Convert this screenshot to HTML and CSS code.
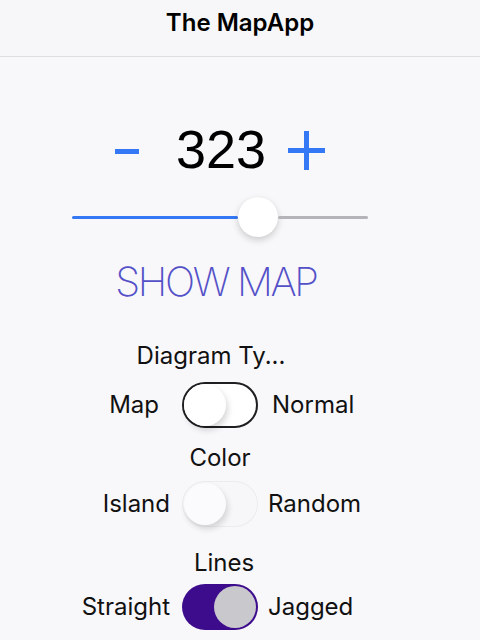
FILE: index.html
```html
<!DOCTYPE html>
<html>
<head>
<meta charset="utf-8">
<link rel="stylesheet" href="styles.css">
</head>
<body>
<header class="nav">
  <h1 class="nav-title">The MapApp</h1>
</header>
<main class="content">
  <div class="stepper">
    <button class="step-btn step-minus" aria-label="decrease">
      <svg width="24" height="6" viewBox="0 0 24 6"><rect x="0" y="0" width="24" height="5" fill="#3478f6"/></svg>
    </button>
    <span class="step-value">323</span>
    <button class="step-btn step-plus" aria-label="increase">
      <svg width="37" height="39" viewBox="0 0 37 39"><rect x="0" y="17" width="37" height="5" fill="#3478f6"/><rect x="16" y="0" width="5" height="39" fill="#3478f6"/></svg>
    </button>
  </div>
  <div class="slider">
    <div class="slider-fill"></div>
    <div class="slider-thumb"></div>
    <div class="slider-rest"></div>
  </div>
  <button class="show-map">SHOW MAP</button>

  <div class="section section-diagram">
    <div class="section-label">Diagram Ty...</div>
    <div class="toggle-row row-map">
      <span class="opt opt-left">Map</span>
      <span class="switch switch-outlined"><span class="knob"></span></span>
      <span class="opt opt-right">Normal</span>
    </div>
  </div>

  <div class="section section-color">
    <div class="section-label">Color</div>
    <div class="toggle-row">
      <span class="opt opt-left">Island</span>
      <span class="switch switch-plain"><span class="knob"></span></span>
      <span class="opt opt-right">Random</span>
    </div>
  </div>

  <div class="section section-lines">
    <div class="section-label">Lines</div>
    <div class="toggle-row">
      <span class="opt opt-left">Straight</span>
      <span class="switch switch-on"><span class="knob"></span></span>
      <span class="opt opt-right">Jagged</span>
    </div>
  </div>
</main>
</body>
</html>
```
FILE: styles.css
```css
* { box-sizing: border-box; }
html, body { margin: 0; padding: 0; }
body {
  background: #f8f7fa;
  font-family: "Inter", "Noto Sans", sans-serif;
  color: #111;
  width: 480px;
  height: 640px;
  overflow: hidden;
}
.nav {
  height: 57px;
  border-bottom: 1px solid #dedde2;
  background: #f7f6f9;
  padding-bottom: 11px;
  display: flex;
  align-items: center;
  justify-content: center;
}
.nav-title {
  margin: 0;
  font-size: 24px;
  font-weight: 600;
  line-height: 28px;
  color: #000;
}
.content {
  width: 440px;
  display: flex;
  flex-direction: column;
  align-items: center;
}
.stepper {
  margin-top: 66px;
  display: flex;
  align-items: center;
  height: 52px;
}
.step-btn {
  border: 0;
  background: none;
  padding: 0;
  display: flex;
  align-items: center;
}
.step-minus { margin-right: 37px; margin-top: 6px; }
.step-plus { margin-left: 22px; margin-top: 2px; }
.step-value {
  font-family: "Liberation Sans", Arial, sans-serif;
  font-size: 54px;
  line-height: 52px;
  color: #000;
}
.slider {
  margin-top: 22px;
  width: 296px;
  height: 40px;
  display: flex;
  align-items: center;
}
.slider-fill {
  width: 166px;
  height: 3px;
  background: #3478f6;
  border-radius: 2px;
}
.slider-thumb {
  width: 40px;
  height: 40px;
  border-radius: 50%;
  background: #fff;
  box-shadow: 0 3px 7px rgba(0,0,0,0.18), 0 0 1px rgba(0,0,0,0.08);
  flex: none;
}
.slider-rest {
  flex: 1;
  height: 3px;
  background: #b5b4b8;
  border-radius: 2px;
}
.show-map {
  margin-top: 25px;
  border: 0;
  background: none;
  padding: 0;
  font-family: "Inter", sans-serif;
  font-weight: 200;
  font-size: 40px;
  line-height: 40px;
  letter-spacing: -2.4px;
  color: #5451c8;
  margin-right: 8px;
}
.section {
  width: 100%;
  display: flex;
  flex-direction: column;
  align-items: center;
}
.section-label {
  font-size: 24px;
  line-height: 28px;
  color: #111;
}
.section-diagram { margin-top: 40px; }
.section-diagram .section-label { margin-right: 18px; }
.section-diagram .toggle-row { margin-top: 12px; }
.section-color { margin-top: 16px; }
.section-color .toggle-row { margin-top: 9px; }
.section-lines { margin-top: 22px; }
.section-lines .section-label { margin-left: 8px; }
.section-lines .toggle-row { margin-top: 7px; }
.toggle-row {
  width: 100%;
  display: grid;
  grid-template-columns: 1fr 76px 1fr;
  column-gap: 12px;
  align-items: center;
  height: 46px;
}
.opt {
  font-size: 24px;
  line-height: 28px;
  color: #111;
}
.opt-left { justify-self: end; }
.opt-right { justify-self: start; margin-left: -2px; }
.row-map .opt-left { margin-right: 11px; }
.row-map .opt-right { margin-left: 2px; }
.switch {
  width: 76px;
  height: 46px;
  border-radius: 23px;
  display: flex;
  align-items: center;
  padding: 2px;
}
.knob {
  width: 42px;
  height: 42px;
  border-radius: 50%;
  display: block;
}
.switch-outlined {
  border: 2px solid #1f1f22;
  background: #fff;
  padding: 0;
}
.switch-outlined .knob {
  background: #fff;
  box-shadow: 2px 4px 6px rgba(0,0,0,0.16);
}
.switch-plain {
  background: #f7f6f9;
  box-shadow: inset 0 0 0 1px #ecebef;
}
.switch-plain .knob {
  background: #fbfafc;
  box-shadow: 2px 4px 6px rgba(0,0,0,0.14);
}
.switch-on {
  background: #3d0c8c;
  justify-content: flex-end;
}
.switch-on .knob {
  background: #c9c8cd;
  width: 42px;
  height: 42px;
}
```
